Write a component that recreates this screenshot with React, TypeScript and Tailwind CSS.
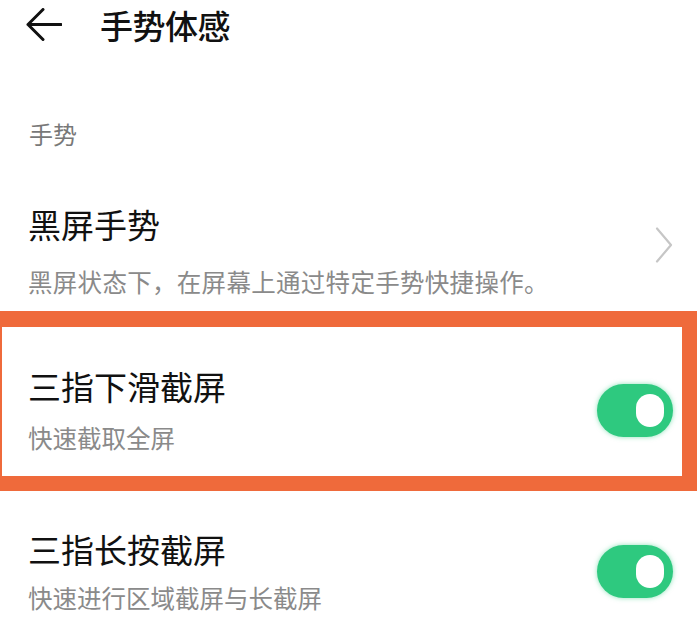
import React, { useState } from 'react';

const FONT = '"Noto Sans CJK SC", "Noto Sans", sans-serif';

function BackArrow() {
  return (
    <svg width="36" height="34" viewBox="0 0 36 34" fill="none" className="shrink-0">
      <path d="M2 16.5H35M2 16.5L17 1.5M2 16.5L17 31.5" stroke="#111" strokeWidth="3" strokeLinecap="round" strokeLinejoin="round" />
    </svg>
  );
}

function Chevron() {
  return (
    <svg width="18" height="36" viewBox="0 0 18 36" fill="none" className="shrink-0">
      <path d="M2 1.5L16 18L2 34.5" stroke="#c6c6c6" strokeWidth="2.2" strokeLinecap="round" strokeLinejoin="round" />
    </svg>
  );
}

function Toggle({ on, onClick }: { on: boolean; onClick: () => void }) {
  return (
    <button
      onClick={onClick}
      className={`shrink-0 w-[76px] h-[53px] rounded-full flex items-center px-[9px] shadow-[0_0_5px_rgba(46,201,127,0.55)] ${
        on ? 'bg-[#2ec97f] justify-end' : 'bg-[#d9d9d9] justify-start'
      }`}
    >
      <span className="block w-[28px] h-[33px] rounded-full bg-white" />
    </button>
  );
}

export default function App() {
  const [swipe, setSwipe] = useState(true);
  const [hold, setHold] = useState(true);

  return (
    <div className="w-[699px] h-[622px] bg-white overflow-hidden text-[#111]" style={{ fontFamily: FONT }}>
      {/* header */}
      <div className="h-[50px] flex items-center pl-[26px]">
        <BackArrow />
        <h1 className="ml-[38px] text-[33px] leading-[50px] font-medium tracking-[-0.5px]">手势体感</h1>
      </div>

      <p className="pt-[68px] pl-[29px] text-[24px] leading-[32px] text-[#787878]">手势</p>

      {/* black screen gestures */}
      <div className="mt-[54px] flex items-start pl-[28px] pr-[26px]">
        <div className="flex-1">
          <div className="text-[33px] leading-[40px]">黑屏手势</div>
          <div className="mt-[22px] text-[24.5px] leading-[32px] text-[#8a8a8a] tracking-[0.3px]">
            黑屏状态下，在屏幕上通过特定手势快捷操作。
          </div>
        </div>
        <div className="mt-[23px]">
          <Chevron />
        </div>
      </div>

      {/* highlighted row */}
      <div className="mt-[13px] w-[697px] border-t-[16px] border-b-[15px] border-r-[15px] border-l-[2px] border-[#ef6a3b] flex items-center pl-[26px] pr-[9px] pt-[39px] pb-[22px]">
        <div className="flex-1">
          <div className="text-[33px] leading-[40px]">三指下滑截屏</div>
          <div className="mt-[16px] text-[24.5px] leading-[32px] text-[#8a8a8a]">快速截取全屏</div>
        </div>
        <Toggle on={swipe} onClick={() => setSwipe(!swipe)} />
      </div>

      {/* long press */}
      <div className="mt-[38px] flex items-center pl-[28px] pr-[26px]">
        <div className="flex-1">
          <div className="text-[33px] leading-[40px]">三指长按截屏</div>
          <div className="mt-[13px] text-[24.5px] leading-[32px] text-[#8a8a8a]">快速进行区域截屏与长截屏</div>
        </div>
        <Toggle on={hold} onClick={() => setHold(!hold)} />
      </div>
    </div>
  );
}
